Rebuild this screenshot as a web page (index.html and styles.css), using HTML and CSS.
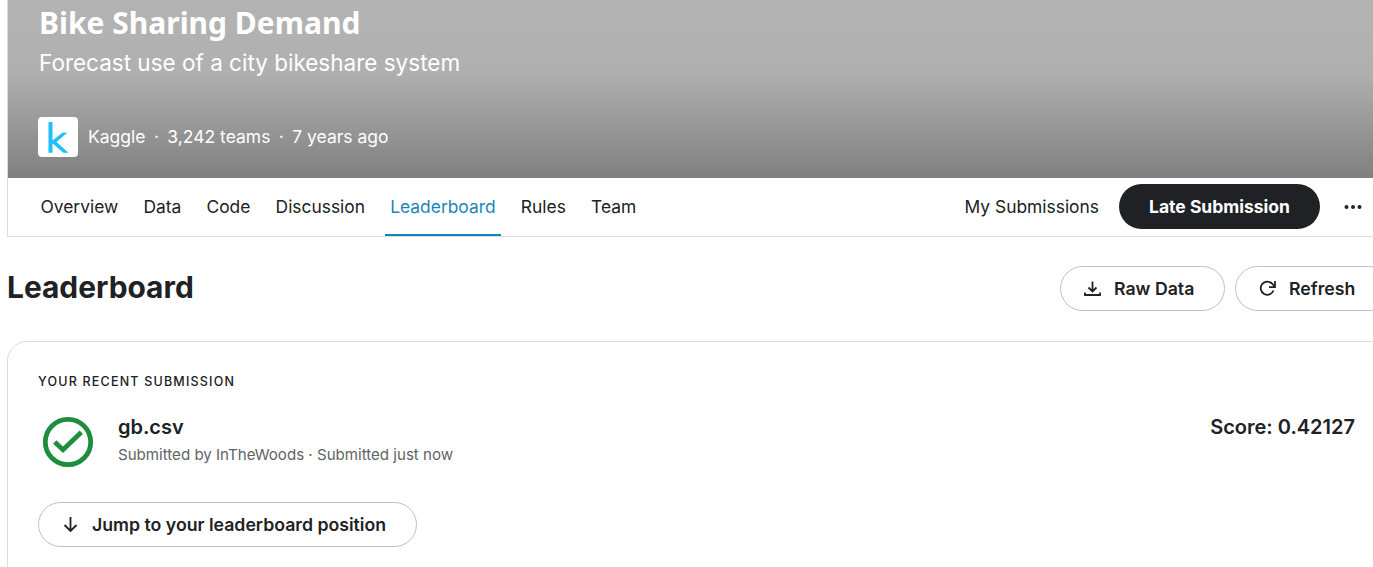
FILE: index.html
```html
<!DOCTYPE html>
<html lang="en">
<head>
<meta charset="utf-8">
<title>Bike Sharing Demand</title>
<link rel="stylesheet" href="styles.css">
</head>
<body>
<main class="page">
  <section class="panel">
    <header class="hero">
      <h1 class="hero-title">Bike Sharing Demand</h1>
      <p class="hero-sub">Forecast use of a city bikeshare system</p>
      <div class="hero-meta">
        <span class="logo"><svg width="40" height="40" viewBox="0 0 40 40"><path class="logo-k" d="M10.500 5h4v18.500l9.800-7.700h5L18.500 25l12 10.700h-5.300L14.500 26.200v9.500h-4z"/></svg></span>
        <span class="meta-text">Kaggle</span><span class="dot">·</span><span class="meta-text">3,242 teams</span><span class="dot">·</span><span class="meta-text">7 years ago</span>
      </div>
    </header>
    <nav class="tabs">
      <a class="tab">Overview</a>
      <a class="tab">Data</a>
      <a class="tab">Code</a>
      <a class="tab">Discussion</a>
      <a class="tab tab-active">Leaderboard</a>
      <a class="tab">Rules</a>
      <a class="tab">Team</a>
      <span class="tabs-right">
        <a class="my-sub">My Submissions</a>
        <button class="late">Late Submission</button>
        <svg class="more" width="18" height="4" viewBox="0 0 18 4"><circle cx="2.500" cy="2" r="2"/><circle cx="9" cy="2" r="2"/><circle cx="15.500" cy="2" r="2"/></svg>
      </span>
    </nav>
  </section>
  <section class="lb-head">
    <h2 class="lb-title">Leaderboard</h2>
    <div class="lb-actions">
      <button class="pill raw">
        <svg class="icon" width="18" height="18" viewBox="0 0 18 18"><path d="M8.500 1.500V11.500M4.500 7.500l4 4 4-4M1 12.500V15h15v-2.500" /></svg>
        Raw Data
      </button>
      <button class="pill refresh">
        <svg class="icon" width="18" height="18" viewBox="0 0 18 18"><path d="M14.500 10.500A6.600 6.600 0 1 1 13 3.500L16 7M16 1v6.200h-6" /></svg>
        Refresh
      </button>
    </div>
  </section>
  <section class="card">
    <div class="card-label">YOUR RECENT SUBMISSION</div>
    <div class="sub-row">
      <svg class="check" width="52" height="52" viewBox="0 0 52 52"><circle cx="26" cy="26" r="22.700"/><path d="M12.700 26l8.300 7.700L39.300 16.300"/></svg>
      <div class="sub-info">
        <div class="sub-name">gb.csv</div>
        <div class="sub-detail">Submitted by InTheWoods · Submitted just now</div>
      </div>
      <div class="score">Score: 0.42127</div>
    </div>
    <button class="pill jump">
      <svg class="icon" width="18" height="18" viewBox="0 0 18 18"><path d="M8.500 1v14M2.500 9l6 6 6-6"/></svg>
      Jump to your leaderboard position
    </button>
  </section>
</main>
</body>
</html>
```
FILE: styles.css
```css
html, body {
  margin: 0;
  height: 567px;
  overflow: hidden;
  background: #fff;
}
body, button {
  font-family: Inter, "Liberation Sans", sans-serif;
  color: #202124;
}
.page {
  width: 1400px;
  padding-left: 7px;
  box-sizing: border-box;
}
.panel {
  width: 1393px;
  border-left: 1px solid #dadce0;
  box-sizing: border-box;
}
.hero {
  height: 178px;
  box-sizing: border-box;
  padding: 5px 0 0 31px;
  background: linear-gradient(#b3b3b3 0, #b0b0b0 72px, #808080 178px);
  color: #fff;
  display: flex;
  flex-direction: column;
}
.hero-title {
  margin: 0;
  font: 700 30px/36px "Noto Sans", sans-serif;
}
.hero-sub {
  margin: 6px 0 0;
  font: 400 22.500px/32px Inter, sans-serif;
}
.hero-meta {
  margin: 38px 0 0 -1px;
  display: flex;
  align-items: center;
  height: 40px;
  font-size: 17.500px;
}
.meta-text, .dot { margin-bottom: 2px; }
.logo {
  width: 40px;
  height: 40px;
  border-radius: 4px;
  background: #fff;
  margin-right: 10px;
  display: flex;
}
.logo-k { fill: #20beff; }
.dot { margin-left: 8.400px; margin-right: 8.400px; }
.tabs {
  height: 59px;
  box-sizing: border-box;
  border-bottom: 1px solid #dadce0;
  display: flex;
  padding-left: 27px;
  font-size: 17.400px;
}
.tab {
  padding: 0 5.500px 1px;
  margin-right: 14.200px;
  display: flex;
  align-items: center;
  height: 58px;
  box-sizing: border-box;
}
.tab-active {
  color: #1a85b8;
  border-bottom: 2px solid #0f86bd;
  padding-top: 1px;
  padding-bottom: 0;
}
.tabs-right {
  margin-left: auto;
  margin-top: 6px;
  padding-right: 38px;
  display: flex;
  align-items: center;
  height: 45px;
}
.my-sub { margin-right: 20px; }
.late {
  width: 201px;
  height: 45px;
  border: 0;
  border-radius: 23px;
  background: #202124;
  color: #fff;
  font: 700 17.500px Inter, sans-serif;
  padding: 0;
}
.more { margin-left: 24px; fill: #202124; flex-shrink: 0; }
.lb-head {
  display: flex;
  align-items: center;
  justify-content: space-between;
  height: 104px;
  width: 1386px;
  box-sizing: border-box;
  padding-bottom: 5px;
}
.lb-title {
  margin: 0;
  font: 700 29.900px/40px Inter, sans-serif;
}
.lb-actions {
  display: flex;
  gap: 10px;
  margin-top: 4px;
}
.pill {
  height: 45px;
  box-sizing: border-box;
  border: 1px solid #bdc1c6;
  border-radius: 23px;
  background: #fff;
  font-weight: 600;
  font-size: 17.700px;
  display: flex;
  align-items: center;
  padding: 0 0 0 23px;
  color: #202124;
  white-space: nowrap;
}
.icon {
  fill: none;
  stroke: #202124;
  stroke-width: 1.800;
  margin-right: 12px;
  flex-shrink: 0;
}
.raw { width: 165px; }
.refresh { width: 158px; }
.card {
  width: 1393px;
  height: 300px;
  box-sizing: border-box;
  border: 1px solid #dadce0;
  border-radius: 20px;
  padding: 32px 30px;
}
.card-label {
  font-size: 12.500px;
  line-height: 16px;
  font-weight: 500;
  letter-spacing: 1.200px;
}
.sub-row {
  display: flex;
  align-items: flex-start;
  margin-top: 26px;
  width: 1317px;
  height: 72px;
}
.check {
  margin: 0 24px 0 4px;
  fill: none;
  stroke: #1e8e3e;
  stroke-width: 4.800px;
  flex-shrink: 0;
}
.sub-info { flex: 1; margin-top: -2px; }
.sub-name {
  font-weight: 600;
  font-size: 20px;
  line-height: 26px;
}
.sub-detail {
  margin-top: 5px;
  font-size: 15.100px;
  line-height: 20px;
  color: #5f6368;
}
.score {
  font-weight: 600;
  font-size: 20px;
  line-height: 26px;
  margin-top: -2px;
}
.jump {
  width: 379px;
  margin-top: 14px;
}
```
